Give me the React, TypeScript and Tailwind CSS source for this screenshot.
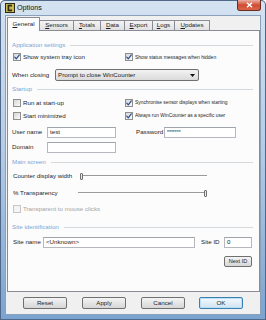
import React from "react";

function Check({ checked = false, disabled = false }: { checked?: boolean; disabled?: boolean }) {
  return (
    <span
      className={
        disabled
          ? "flex h-[8px] w-[8px] shrink-0 items-center justify-center border border-[#c6c6c6] bg-[#f4f4f4]"
          : "flex h-[8px] w-[8px] shrink-0 items-center justify-center border border-[#8e8f8f] bg-gradient-to-br from-[#d6d6d6] to-[#fbfbfb]"
      }
    >
      {checked && (
        <svg width="6" height="6" viewBox="0 0 6 6">
          <path d="M0.8 3.1 L2.3 4.8 L5.3 0.9" stroke="#2b4d8f" strokeWidth="1.2" fill="none" strokeLinecap="round" strokeLinejoin="round" />
        </svg>
      )}
    </span>
  );
}

function Group({ title, className }: { title: string; className: string }) {
  return (
    <div className={"flex h-[10px] items-center pl-[4px] pr-[6px] " + className}>
      <span className="text-[#7ba5d8]">{title}</span>
      <span className="ml-[5px] h-px flex-1 bg-[#d4d9de]" />
    </div>
  );
}

function Field({ w, value }: { w: string; value: string }) {
  return (
    <div className={"flex h-[11px] items-center border border-[#b5b8bf] border-t-[#9ea3ac] bg-white pl-[2px] " + w}>
      {value}
    </div>
  );
}

function Btn({ label, def = false, className }: { label: string; def?: boolean; className: string }) {
  return (
    <div
      className={
        def
          ? "flex h-[12px] w-[44px] items-center justify-center rounded-[2px] border border-[#3c7fb1] bg-gradient-to-b from-[#f4f9fd] to-[#cfe3f1] shadow-[inset_0_0_0_1px_#b9e0f7] " + className
          : "flex h-[12px] w-[44px] items-center justify-center rounded-[2px] border border-[#707070] bg-gradient-to-b from-[#f4f4f4] to-[#d6d6d6] " + className
      }
    >
      {label}
    </div>
  );
}

function Tab({ label, w, selected = false }: { label: React.ReactNode; w: string; selected?: boolean }) {
  if (selected) {
    return (
      <div className={"relative z-10 -mb-px flex h-[14px] items-center justify-center border border-b-0 border-[#898c95] bg-[#fcfcfc] " + w}>
        {label}
      </div>
    );
  }
  return (
    <div className={"flex h-[10px] items-center justify-center border-t border-r border-[#898c95] bg-gradient-to-b from-[#f3f3f3] to-[#e1e1e1] " + w}>
      {label}
    </div>
  );
}

function Track({ w }: { w: string }) {
  return <div className={"h-[2px] border-b border-b-white bg-[#9a9a9a] " + w} />;
}

function Thumb() {
  return <div className="h-[7px] w-[3px] shrink-0 rounded-[1px] border border-[#6f6f6f] bg-[#ececec]" />;
}

export default function App() {
  return (
    <div className="font-['Liberation_Sans',Arial,sans-serif] text-[6.2px] leading-none text-[#1c1c1c]">
      <div className="flex h-[320px] w-[266px] flex-col rounded-t-[5px] bg-gradient-to-b from-[#d5e3f1] via-[#b1cae5] to-[#7aa3d0] px-[5px] pb-[5px] shadow-[inset_0_0_0_1px_#50698a]">
        {/* title bar */}
        <div className="flex h-[15px] items-center">
          <svg width="10" height="10" viewBox="0 0 10 10" className="shrink-0">
            <rect x="0" y="0" width="10" height="10" fill="#2c2a18" />
            <rect x="1" y="1" width="8" height="8" fill="#c9b84c" />
            <path d="M7 2.6 H3.4 V7.4 H7" stroke="#2c2a18" strokeWidth="1.6" fill="none" />
          </svg>
          <span className="ml-[2px] text-[7.2px] text-[#111]">Options</span>
          <div className="ml-auto flex h-[11px] w-[24px] items-center justify-center self-start rounded-b-[3px] border border-t-0 border-[#6d2a1e] bg-gradient-to-b from-[#e9b0a2] via-[#cf4a33] to-[#d8674a]">
            <svg width="7" height="6" viewBox="0 0 7 6">
              <path d="M1 0.8 L6 5.2 M6 0.8 L1 5.2" stroke="#fff" strokeWidth="1.5" />
            </svg>
          </div>
        </div>

        {/* client */}
        <div className="flex flex-1 flex-col border border-[#8aa1b9] bg-[#f0f0f0]">
          {/* tabs */}
          <div className="mt-px flex h-[13px] items-end pl-px">
            <Tab selected w="w-[33px]" label={<span><u>G</u>eneral</span>} />
            <Tab w="w-[34px]" label={<span><u>S</u>ensors</span>} />
            <Tab w="w-[27px]" label={<span><u>T</u>otals</span>} />
            <Tab w="w-[24px]" label={<span><u>D</u>ata</span>} />
            <Tab w="w-[28px]" label={<span><u>E</u>xport</span>} />
            <Tab w="w-[22px]" label={<span><u>L</u>ogs</span>} />
            <Tab w="w-[35px]" label={<span><u>U</u>pdates</span>} />
          </div>

          {/* panel */}
          <div className="ml-px flex h-[262px] w-[253px] flex-col border border-[#898c95] bg-[#fcfcfc]">
            <Group title="Application settings" className="mt-[9px]" />
            <div className="mt-[2px] flex h-[10px] items-center pl-[5px]">
              <div className="flex w-[112px] items-center">
                <Check checked />
                <span className="ml-[2px]">Show system tray icon</span>
              </div>
              <Check checked />
              <span className="ml-[2px] text-[5px]">Show status messages when hidden</span>
            </div>
            <div className="mt-[7px] flex h-[12px] items-center pl-[4px]">
              <span className="w-[43px]">When closing</span>
              <div className="flex h-[12px] w-[144px] items-center rounded-[2px] border border-[#707070] bg-gradient-to-b from-[#f3f3f3] to-[#dadada] pl-[2px]">
                <span>Prompt to close WinCounter</span>
                <svg width="5" height="3" viewBox="0 0 5 3" className="ml-auto mr-[3px]">
                  <path d="M0 0 H5 L2.5 3 Z" fill="#111" />
                </svg>
              </div>
            </div>
            <Group title="Startup" className="mt-[3px]" />
            <div className="mt-[4px] flex h-[10px] items-center pl-[5px]">
              <div className="flex w-[112px] items-center">
                <Check />
                <span className="ml-[2px]">Run at start-up</span>
              </div>
              <Check checked />
              <span className="ml-[2px] text-[4.9px]">Synchronise sensor displays when starting</span>
            </div>
            <div className="mt-[3px] flex h-[10px] items-center pl-[5px]">
              <div className="flex w-[112px] items-center">
                <Check />
                <span className="ml-[2px]">Start minimized</span>
              </div>
              <Check checked />
              <span className="ml-[2px] text-[4.9px]">Always run WinCounter as a specific user</span>
            </div>
            <div className="mt-[6px] flex h-[11px] items-center pl-[4px]">
              <span className="w-[35px]">User name</span>
              <Field w="w-[69px]" value="test" />
              <span className="ml-[20px] w-[28px]">Password</span>
              <Field w="w-[72px] text-[5px]" value="*******" />
            </div>
            <div className="mt-[4px] flex h-[11px] items-center pl-[4px]">
              <span className="w-[35px]">Domain</span>
              <Field w="w-[69px]" value="" />
            </div>
            <Group title="Main screen" className="mt-[4px]" />
            <div className="mt-[4px] flex h-[10px] items-center pl-[5px]">
              <span className="w-[67px]">Counter display width</span>
              <Thumb />
              <Track w="w-[124px]" />
            </div>
            <div className="mt-[7px] flex h-[10px] items-center pl-[5px]">
              <span className="w-[65px]">% Transparency</span>
              <Track w="w-[126px]" />
              <Thumb />
            </div>
            <div className="mt-[6px] flex h-[10px] items-center pl-[5px]">
              <Check disabled />
              <span className="ml-[2px] text-[#a3a3a3]">Transparent to mouse clicks</span>
            </div>
            <Group title="Site identification" className="mt-[8px]" />
            <div className="mt-[5px] flex h-[11px] items-center pl-[5px]">
              <span className="w-[30px]">Site name</span>
              <Field w="w-[152px]" value="<Unknown>" />
              <span className="ml-[6px] w-[23px]">Site ID</span>
              <Field w="w-[28px]" value="0" />
            </div>
            <div className="mt-[8px] flex h-[11px] items-center pl-[216px]">
              <div className="flex h-[11px] w-[28px] items-center justify-center rounded-[2px] border border-[#707070] bg-gradient-to-b from-[#f4f4f4] to-[#d6d6d6] text-[5.6px]">
                Next ID
              </div>
            </div>
          </div>

          {/* buttons */}
          <div className="mt-[5px] flex items-center">
            <Btn label="Reset" className="ml-[17px]" />
            <Btn label="Apply" className="ml-[15px]" />
            <Btn label="Cancel" className="ml-[15px]" />
            <Btn label="OK" def className="ml-[14px]" />
          </div>
        </div>
      </div>
    </div>
  );
}
